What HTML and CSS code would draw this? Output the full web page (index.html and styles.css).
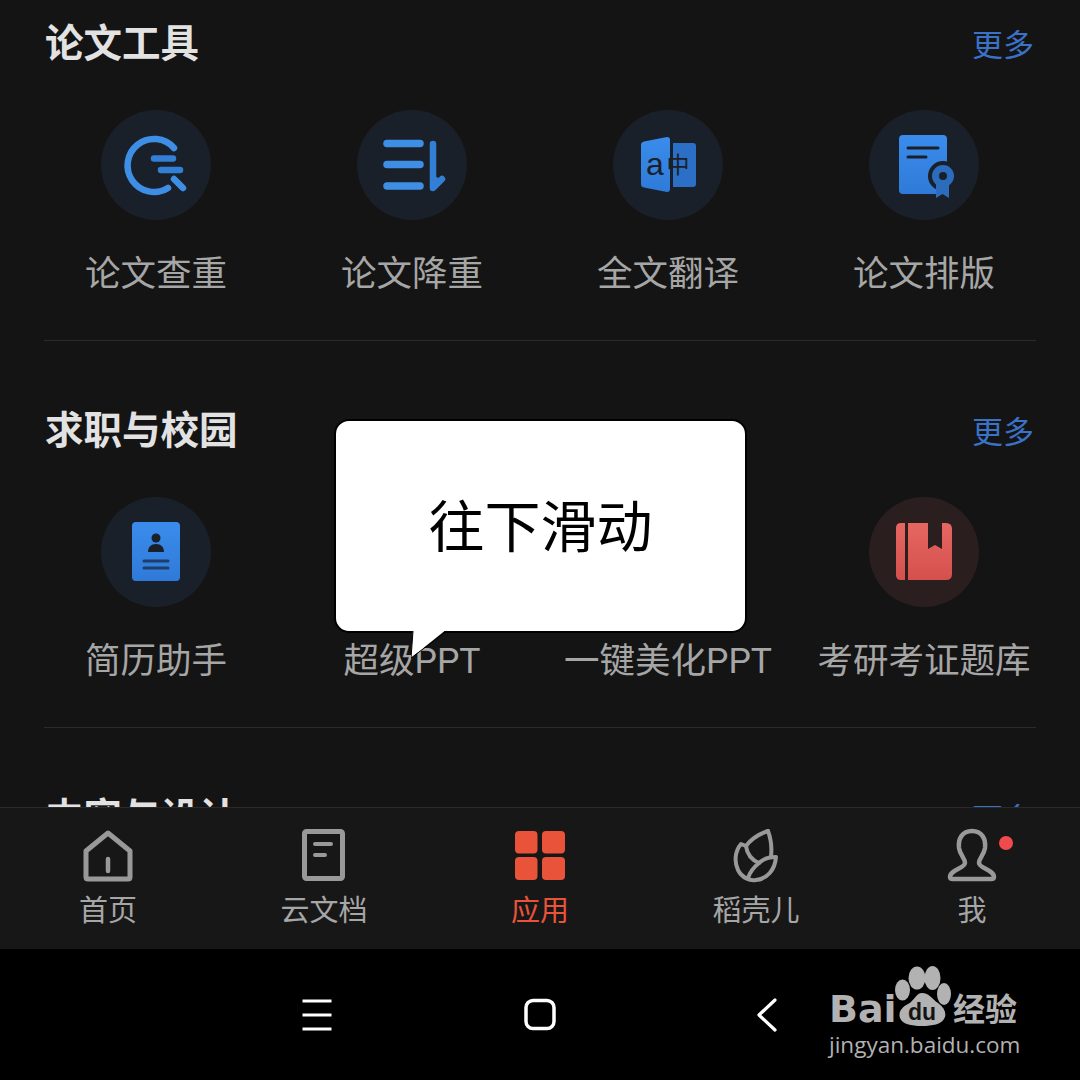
FILE: index.html
```html
<!DOCTYPE html>
<html lang="zh-CN">
<head>
    <meta charset="UTF-8">
    <meta name="viewport" content="width=device-width, initial-scale=1.0">
    <title>应用</title>
    <link rel="stylesheet" href="styles.css">
</head>
<body>
    <main class="scroll">
        <section class="section">
            <div class="section-head">
                <h2>论文工具</h2>
                <a class="more">更多</a>
            </div>
            <div class="tools">
                <div class="tool">
                    <div class="circle">
                        <svg class="tool-icon" viewBox="0 0 110 110">
                            <path d="M73 38A26.500 26.500 0 1 0 67 78" fill="none" stroke="#3f8ee6" stroke-width="6.500" stroke-linecap="round"/>
                            <path d="M73 69L82 78" fill="none" stroke="#3f8ee6" stroke-width="6.500" stroke-linecap="round"/>
                            <path d="M53 48.500H72M60 60H79" fill="none" stroke="#337fd6" stroke-width="6.500" stroke-linecap="round"/>
                        </svg>
                    </div>
                    <span class="tool-name">论文查重</span>
                </div>
                <div class="tool">
                    <div class="circle">
                        <svg class="tool-icon" viewBox="0 0 110 110">
                            <path d="M30 33.500H63M30 54.500H63M30 76H63" fill="none" stroke="#3f8ee6" stroke-width="7.500" stroke-linecap="round"/>
                            <path d="M76 34V78L85 69" fill="none" stroke="#337fd6" stroke-width="6.500" stroke-linecap="round" stroke-linejoin="round"/>
                            <path d="M76 66L85 69L76 78Z" fill="#337fd6"/>
                        </svg>
                    </div>
                    <span class="tool-name">论文降重</span>
                </div>
                <div class="tool">
                    <div class="circle">
                        <svg class="tool-icon" viewBox="0 0 110 110">
                            <path d="M60 33H80Q83 33 83 36V74Q83 77 80 77H60Z" fill="#2b70c6"/>
                            <path d="M28 35Q28 32 31 31.500L54 27Q57 27 57 30V79Q57 82 54 82L31 77.500Q28 77 28 74Z" fill="url(#blueFill)"/>
                            <text class="glyph-a" x="42" y="65" text-anchor="middle">a</text>
                            <text class="glyph-zh" x="65" y="63" text-anchor="middle">中</text>
                        </svg>
                    </div>
                    <span class="tool-name">全文翻译</span>
                </div>
                <div class="tool">
                    <div class="circle">
                        <svg class="tool-icon" viewBox="0 0 110 110">
                            <defs>
                                <linearGradient id="blueFill" x1="0" y1="0" x2="0" y2="1">
                                    <stop offset="0" stop-color="#3a8cec"/>
                                    <stop offset="1" stop-color="#2f7ad8"/>
                                </linearGradient>
                            </defs>
                            <rect x="30" y="25" width="48" height="59" rx="4" fill="url(#blueFill)"/>
                            <path d="M39 38H69M39 47H57" fill="none" stroke="#1a2029" stroke-width="3" stroke-linecap="round"/>
                            <circle cx="74" cy="66" r="15" fill="#1a2029"/>
                            <path d="M67 72V88L73.500 84L80 88V72Z" fill="#2b6cbc"/>
                            <circle cx="74" cy="66" r="7.500" fill="#1a2029" stroke="#2b6cbc" stroke-width="7"/>
                        </svg>
                    </div>
                    <span class="tool-name">论文排版</span>
                </div>
            </div>
        </section>

        <section class="section">
            <div class="section-head">
                <h2>求职与校园</h2>
                <a class="more">更多</a>
            </div>
            <div class="tools">
                <div class="tool">
                    <div class="circle">
                        <svg class="tool-icon" viewBox="0 0 110 110">
                            <rect x="31" y="25" width="48" height="59" rx="4" fill="url(#blueFill)"/>
                            <circle cx="55" cy="41" r="4.500" fill="#1a2029"/>
                            <path d="M47 55C47 50 50 47 55 47C60 47 63 50 63 55Z" fill="#1a2029"/>
                            <path d="M43 64H67M43 71H67" fill="none" stroke="#1f3f68" stroke-width="3" stroke-linecap="round"/>
                        </svg>
                    </div>
                    <span class="tool-name">简历助手</span>
                </div>
                <div class="tool">
                    <div class="circle"></div>
                    <span class="tool-name">超级PPT</span>
                </div>
                <div class="tool">
                    <div class="circle"></div>
                    <span class="tool-name">一键美化PPT</span>
                </div>
                <div class="tool">
                    <div class="circle circle-red">
                        <svg class="tool-icon" viewBox="0 0 110 110">
                            <defs>
                                <linearGradient id="redFill" x1="0" y1="0" x2="0" y2="1">
                                    <stop offset="0" stop-color="#e66762"/>
                                    <stop offset="1" stop-color="#d5504c"/>
                                </linearGradient>
                            </defs>
                            <path d="M32 26H36V83H32Q27 83 27 78V31Q27 26 32 26Z" fill="url(#redFill)"/>
                            <path d="M39 26H59V52L66 48L73 52V26H77Q83 26 83 32V77Q83 83 77 83H39Z" fill="url(#redFill)"/>
                        </svg>
                    </div>
                    <span class="tool-name">考研考证题库</span>
                </div>
            </div>
        </section>

        <section class="section">
            <div class="section-head">
                <h2>内容与设计</h2>
                <a class="more">更多</a>
            </div>
        </section>
    </main>

    <nav class="tabs">
        <div class="tab">
            <svg class="tab-icon" viewBox="0 0 60 60">
                <path d="M30 7L52 25V51Q52 53 50 53H10Q8 53 8 51V25Z" fill="none" stroke="#999" stroke-width="5" stroke-linejoin="round"/>
                <path d="M30 33V45" fill="none" stroke="#999" stroke-width="4.500" stroke-linecap="round"/>
            </svg>
            <span>首页</span>
        </div>
        <div class="tab">
            <svg class="tab-icon" viewBox="0 0 60 60">
                <rect x="10.500" y="5.500" width="38" height="47" rx="2" fill="none" stroke="#999" stroke-width="5"/>
                <path d="M21 18H37M21 29H31" fill="none" stroke="#999" stroke-width="4" stroke-linecap="round"/>
            </svg>
            <span>云文档</span>
        </div>
        <div class="tab tab-active">
            <svg class="tab-icon" viewBox="0 0 60 60">
                <rect x="5" y="5" width="22.500" height="22.500" rx="4" fill="#e8533a"/>
                <rect x="32" y="5" width="23" height="22.500" rx="4" fill="#e8533a"/>
                <rect x="5" y="31" width="22.500" height="23" rx="4" fill="#e8533a"/>
                <rect x="32" y="31" width="23" height="23" rx="4" fill="#e8533a"/>
            </svg>
            <span>应用</span>
        </div>
        <div class="tab">
            <svg class="tab-icon" viewBox="0 0 60 60">
                <path d="M42 5C33 8 25 13 20 20L15 18C9 25 8 36 12 44C16 52 24 55 30 54C41 53 49 44 50 31C43 31 37 33 33 37C28 41 24 46 22 52" fill="none" stroke="#999" stroke-width="4" stroke-linecap="round" stroke-linejoin="round"/>
                <path d="M42 5C45 13 46 22 45 31M20 20C21 28 26 34 33 37" fill="none" stroke="#999" stroke-width="4" stroke-linecap="round" stroke-linejoin="round"/>
            </svg>
            <span>稻壳儿</span>
        </div>
        <div class="tab">
            <svg class="tab-icon" viewBox="0 0 60 60">
                <path d="M30 5C20 5 16 13 17 22C18 29 23 32 23 37C23 42 8 44 8 51C8 53 9 53 11 53H49C51 53 52 53 52 51C52 44 37 42 37 37C37 32 42 29 43 22C44 13 40 5 30 5Z" fill="none" stroke="#999" stroke-width="4.500" stroke-linejoin="round"/>
            </svg>
            <span>我</span>
            <i class="dot"></i>
        </div>
    </nav>

    <footer class="sysbar">
        <svg class="sys-icon" viewBox="0 0 40 40">
            <path d="M5.500 6H34.500M5.500 20H34.500M5.500 34H34.500" fill="none" stroke="#fff" stroke-width="3"/>
        </svg>
        <svg class="sys-icon" viewBox="0 0 40 40">
            <rect x="4" y="5.500" width="28" height="28" rx="7" fill="none" stroke="#fff" stroke-width="3.500"/>
        </svg>
        <svg class="sys-icon" viewBox="0 0 40 40">
            <path d="M28 5L12 20L28 35" fill="none" stroke="#fff" stroke-width="3.200" stroke-linecap="round" stroke-linejoin="round"/>
        </svg>
    </footer>

    <div class="bubble">
        <span>往下滑动</span>
        <svg class="bubble-tail" width="38" height="31" viewBox="0 0 38 31">
            <path d="M2 0L0 29L36 0Z" fill="#fff"/>
            <path d="M2 2L0 29L36 2" fill="none" stroke="#000" stroke-width="1"/>
        </svg>
    </div>

    <div class="watermark">
        <div class="wm-row">
            <span class="wm-bai">Bai</span>
            <svg class="wm-paw" viewBox="0 0 56 60">
                <ellipse cx="22" cy="12" rx="8.500" ry="11.500" fill="#b2b2b2"/>
                <ellipse cx="37.500" cy="12" rx="8" ry="12" fill="#b2b2b2"/>
                <ellipse cx="7.500" cy="24" rx="7.500" ry="10.500" fill="#b2b2b2"/>
                <ellipse cx="49" cy="28" rx="7" ry="11" fill="#b2b2b2"/>
                <path d="M27 27C34 27 37 33 43 37C50 42 52 48 49 53C46 58 38 60 27 60C16 60 7 58 5 52C3 46 7 41 13 38C19 35 21 27 27 27Z" fill="#b2b2b2"/>
                <text class="wm-du" x="27" y="54" text-anchor="middle">du</text>
            </svg>
            <span class="wm-jy">经验</span>
        </div>
        <div class="wm-url">jingyan.baidu.com</div>
    </div>
</body>
</html>
```

FILE: styles.css
```css
* {
    box-sizing: border-box;
}
body {
    position: relative;
    width: 1080px;
    height: 1080px;
    margin: 0;
    overflow: hidden;
    background: #141414;
    font-family: Roboto, "Noto Sans CJK SC", sans-serif;
}
.scroll {
    height: 807px;
    overflow: hidden;
    padding: 0 28px;
}
.section {
    height: 387px;
}
.section-head {
    display: flex;
    justify-content: space-between;
    align-items: center;
    height: 86px;
    margin: 0 18px 24px 17px;
}
.section-head h2 {
    margin: 0 0 6px;
    font-size: 38.500px;
    font-weight: 700;
    color: #e2e2e2;
}
.more {
    margin-bottom: 2px;
    font-size: 31px;
    color: #3a72c8;
}
.tools {
    position: relative;
    display: grid;
    grid-template-columns: repeat(4, 256px);
    height: 231px;
}
.tools::after {
    content: "";
    position: absolute;
    left: 16px;
    right: 16px;
    bottom: 0;
    border-bottom: 1px solid #2a2a2a;
}
.tool {
    display: flex;
    flex-direction: column;
    align-items: center;
}
.circle {
    width: 110px;
    height: 110px;
    border-radius: 50%;
    background: #1a2029;
}
.circle-red {
    background: #2a1e1e;
}
.tool-icon {
    display: block;
    width: 110px;
    height: 110px;
}
.tool-name {
    margin-top: 29px;
    font-size: 35.500px;
    line-height: 50px;
    white-space: nowrap;
    color: #a6a6a6;
}
.glyph-a {
    font-family: "Liberation Sans", sans-serif;
    font-size: 32px;
    fill: #1a2029;
}
.glyph-zh {
    font-family: "Noto Sans CJK SC", sans-serif;
    font-size: 23px;
    fill: #1a2029;
}
.tabs {
    display: grid;
    grid-template-columns: repeat(5, 216px);
    height: 142px;
    padding-top: 18px;
    border-top: 1px solid #2a2a2a;
    background: #171717;
}
.tab {
    position: relative;
    display: flex;
    flex-direction: column;
    align-items: center;
    font-size: 29px;
    line-height: 40px;
    color: #a6a6a6;
}
.tab span {
    margin-top: 5px;
}
.tab-active {
    color: #e8533a;
}
.tab-icon {
    display: block;
    width: 60px;
    height: 60px;
}
.dot {
    position: absolute;
    left: 135px;
    top: 10px;
    width: 14px;
    height: 14px;
    border-radius: 50%;
    background: #ef4a4d;
}
.sysbar {
    display: flex;
    justify-content: center;
    align-items: center;
    gap: 185px;
    height: 131px;
    padding: 0 0 0 4px;
    background: #000;
}
.sys-icon {
    display: block;
    width: 40px;
    height: 40px;
}
.bubble {
    position: absolute;
    left: 334px;
    top: 419px;
    display: flex;
    justify-content: center;
    align-items: center;
    width: 413px;
    height: 214px;
    padding-bottom: 7px;
    border: 2px solid #000;
    border-radius: 15px;
    background: #fff;
    font-family: "Noto Sans CJK SC", sans-serif;
    font-size: 56px;
    color: #000;
}
.bubble-tail {
    position: absolute;
    left: 75px;
    top: 208px;
    display: block;
}
.watermark {
    position: absolute;
    left: 829px;
    top: 966px;
    width: 195px;
    color: #b2b2b2;
}
.wm-row {
    display: flex;
    align-items: flex-end;
    height: 60px;
}
.wm-bai {
    flex: none;
    width: 66px;
    margin-bottom: -5px;
    font-family: "DejaVu Sans", sans-serif;
    font-size: 38px;
    line-height: 44px;
    font-weight: 700;
}
.wm-paw {
    flex: none;
    display: block;
    width: 56px;
    height: 60px;
}
.wm-jy {
    flex: none;
    margin-left: 2px;
    margin-bottom: -3px;
    font-family: "Noto Sans CJK SC", sans-serif;
    font-size: 32px;
    line-height: 44px;
    font-weight: 700;
}
.wm-du {
    font-family: "Liberation Sans", sans-serif;
    font-size: 23px;
    font-weight: 700;
    fill: #141414;
}
.wm-url {
    margin-top: 6px;
    font-family: "Open Sans", sans-serif;
    font-size: 22.500px;
    line-height: 26px;
    white-space: nowrap;
    color: #b2b2b2;
}
```
